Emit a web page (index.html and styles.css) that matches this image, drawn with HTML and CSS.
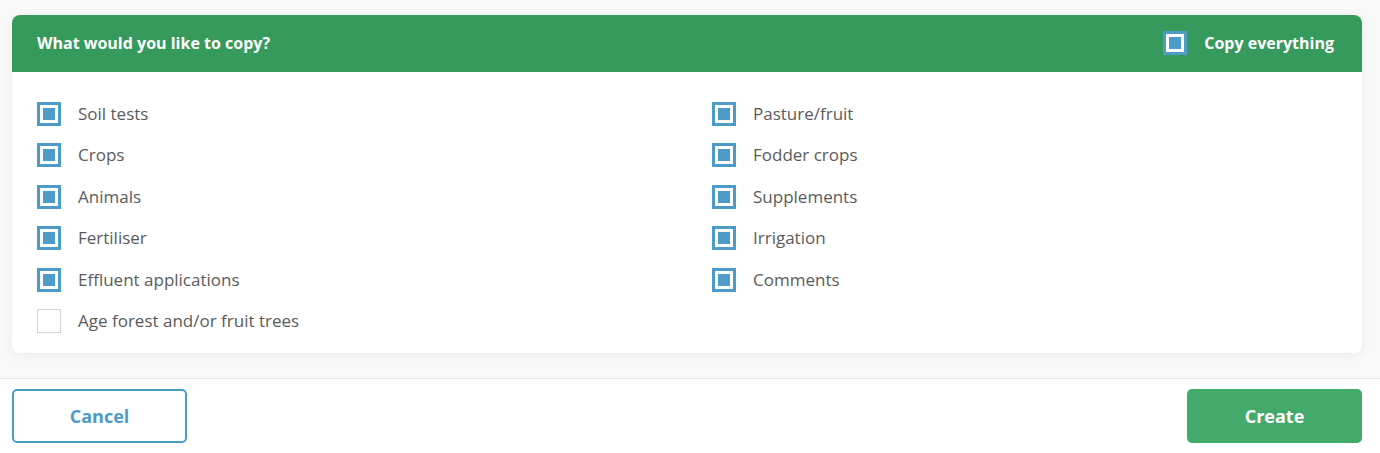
FILE: index.html
```html
<!DOCTYPE html>
<html lang="en">
<head>
<meta charset="utf-8">
<title>Copy</title>
<link rel="stylesheet" href="styles.css">
</head>
<body>
<div class="modal">
  <div class="top">
    <section class="card">
      <header class="card-head">
        <h2 class="title">What would you like to copy?</h2>
        <label class="all">
          <span class="cb cb-head checked"><span class="dot"></span></span>
          <span class="all-label">Copy everything</span>
        </label>
      </header>
      <div class="card-body">
        <ul class="col">
          <li class="opt"><span class="cb checked"><span class="dot"></span></span><span class="lbl">Soil tests</span></li>
          <li class="opt"><span class="cb checked"><span class="dot"></span></span><span class="lbl">Crops</span></li>
          <li class="opt"><span class="cb checked"><span class="dot"></span></span><span class="lbl">Animals</span></li>
          <li class="opt"><span class="cb checked"><span class="dot"></span></span><span class="lbl">Fertiliser</span></li>
          <li class="opt"><span class="cb checked"><span class="dot"></span></span><span class="lbl">Effluent applications</span></li>
          <li class="opt"><span class="cb"></span><span class="lbl">Age forest and/or fruit trees</span></li>
        </ul>
        <ul class="col">
          <li class="opt"><span class="cb checked"><span class="dot"></span></span><span class="lbl">Pasture/fruit</span></li>
          <li class="opt"><span class="cb checked"><span class="dot"></span></span><span class="lbl">Fodder crops</span></li>
          <li class="opt"><span class="cb checked"><span class="dot"></span></span><span class="lbl">Supplements</span></li>
          <li class="opt"><span class="cb checked"><span class="dot"></span></span><span class="lbl">Irrigation</span></li>
          <li class="opt"><span class="cb checked"><span class="dot"></span></span><span class="lbl">Comments</span></li>
        </ul>
      </div>
    </section>
  </div>
  <footer class="foot">
    <button class="btn btn-cancel">Cancel</button>
    <button class="btn btn-create">Create</button>
  </footer>
</div>
</body>
</html>
```
FILE: styles.css
```css
html, body {
  margin: 0;
  padding: 0;
  background: #ffffff;
  font-family: "Open Sans", "Noto Sans", sans-serif;
}
.modal {
  width: 1380px;
  height: 453px;
  display: flex;
  flex-direction: column;
}
.top {
  background: #f9f9f9;
  padding: 15px 18px 25px 12px;
  border-bottom: 1px solid #e3e7e7;
}
.card {
  background: #ffffff;
  border-radius: 8px;
  box-shadow: 0 2px 12px rgba(0, 0, 0, 0.06);
  overflow: hidden;
}
.card-head {
  height: 57px;
  background: #359a5c;
  display: flex;
  align-items: center;
  justify-content: space-between;
  padding: 0 28px 2px 25px;
  box-sizing: border-box;
}
.title {
  margin: 0;
  color: #ffffff;
  font-size: 16px;
  font-weight: 700;
}
.all {
  display: flex;
  align-items: center;
  gap: 17px;
}
.all-label {
  color: #ffffff;
  font-size: 16px;
  font-weight: 700;
}
.card-body {
  display: grid;
  grid-template-columns: 1fr 1fr;
  padding: 30px 0 3px;
}
.col {
  list-style: none;
  margin: 0;
  padding: 0 25px;
}
.opt {
  height: 41.4px;
  display: flex;
  align-items: flex-start;
  gap: 17px;
}
.cb {
  box-sizing: border-box;
  width: 24px;
  height: 24px;
  flex: none;
  border: 1px solid #cfd8d8;
  background: #fff;
  display: flex;
  align-items: center;
  justify-content: center;
}
.cb.checked {
  border: 3px solid #4d9cc7;
}
.cb-head {
  border-color: #4f96c2;
}
.dot {
  width: 12px;
  height: 12px;
  background: #4d9cc7;
}
.lbl {
  color: #5b5b5b;
  font-size: 17px;
  line-height: 24px;
}
.foot {
  display: flex;
  justify-content: space-between;
  padding: 10px 18px 0 12px;
}
.btn {
  width: 175px;
  height: 54px;
  border-radius: 5px;
  font-family: "Open Sans", "Noto Sans", sans-serif;
  font-size: 18px;
  font-weight: 700;
  cursor: pointer;
}
.btn-cancel {
  background: #ffffff;
  border: 2px solid #4d9cc7;
  color: #4d9cc7;
}
.btn-create {
  background: #44aa6c;
  border: none;
  color: #ffffff;
}
```
